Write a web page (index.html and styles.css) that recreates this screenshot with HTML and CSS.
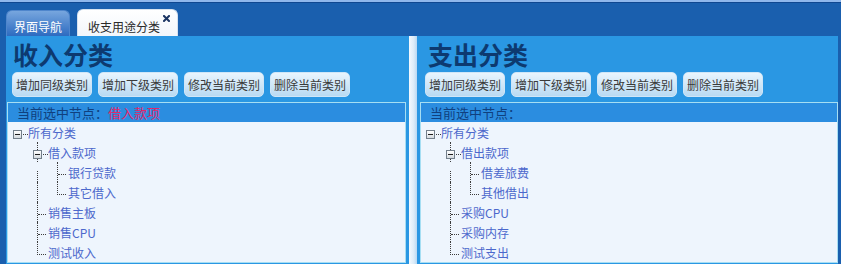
FILE: index.html
```html
<!DOCTYPE html>
<html lang="zh-CN">
  <head>
    <meta charset="UTF-8" />
    <meta name="viewport" content="width=device-width, initial-scale=1.0" />
    <title>收支用途分类</title>
    <link rel="stylesheet" href="styles.css">
  </head>
  <body>
    <div class="topbar">
      <div class="tab">界面导航</div>
      <div class="tab active">
        <span>收支用途分类</span>
        <svg class="close" width="7" height="7" viewBox="0 0 7 7"><path d="M1 1L6 6M6 1L1 6" stroke="#1b3563" stroke-width="2" stroke-linecap="square"/></svg>
      </div>
    </div>
    <div class="main">
      <section class="panel panel-left">
        <h1 class="title">收入分类</h1>
        <div class="toolbar">
          <button class="btn">增加同级类别</button>
          <button class="btn">增加下级类别</button>
          <button class="btn">修改当前类别</button>
          <button class="btn">删除当前类别</button>
        </div>
        <div class="box">
          <div class="current">当前选中节点：<span class="picked">借入款项</span></div>
          <div class="tree">
            <div class="row">
              <span class="cell"><span class="node top"><i class="tog"></i><i class="stub"></i></span></span>
              <span class="label">所有分类</span>
            </div>
            <div class="row">
              <span class="cell"></span>
              <span class="cell"><span class="node"><i class="up"></i><span class="knob"><i class="tog"></i><i class="stub"></i></span><i class="down"></i></span></span>
              <span class="label">借入款项</span>
            </div>
            <div class="row">
              <span class="cell"></span>
              <span class="cell"><i class="vline late"></i></span>
              <span class="cell"><i class="tee"><i></i></i></span>
              <span class="label">银行贷款</span>
            </div>
            <div class="row">
              <span class="cell"></span>
              <span class="cell"><i class="vline"></i></span>
              <span class="cell"><i class="corner"></i></span>
              <span class="label">其它借入</span>
            </div>
            <div class="row">
              <span class="cell"></span>
              <span class="cell"><i class="tee"><i></i></i></span>
              <span class="label">销售主板</span>
            </div>
            <div class="row">
              <span class="cell"></span>
              <span class="cell"><i class="tee"><i></i></i></span>
              <span class="label">销售CPU</span>
            </div>
            <div class="row">
              <span class="cell"></span>
              <span class="cell"><i class="corner"></i></span>
              <span class="label">测试收入</span>
            </div>
          </div>
        </div>
      </section>
      <div class="split"></div>
      <section class="panel panel-right">
        <h1 class="title">支出分类</h1>
        <div class="toolbar">
          <button class="btn">增加同级类别</button>
          <button class="btn">增加下级类别</button>
          <button class="btn">修改当前类别</button>
          <button class="btn">删除当前类别</button>
        </div>
        <div class="box">
          <div class="current">当前选中节点：<span class="picked"></span></div>
          <div class="tree">
            <div class="row">
              <span class="cell"><span class="node top"><i class="tog"></i><i class="stub"></i></span></span>
              <span class="label">所有分类</span>
            </div>
            <div class="row">
              <span class="cell"></span>
              <span class="cell"><span class="node"><i class="up"></i><span class="knob"><i class="tog"></i><i class="stub"></i></span><i class="down"></i></span></span>
              <span class="label">借出款项</span>
            </div>
            <div class="row">
              <span class="cell"></span>
              <span class="cell"><i class="vline late"></i></span>
              <span class="cell"><i class="tee"><i></i></i></span>
              <span class="label">借差旅费</span>
            </div>
            <div class="row">
              <span class="cell"></span>
              <span class="cell"><i class="vline"></i></span>
              <span class="cell"><i class="corner"></i></span>
              <span class="label">其他借出</span>
            </div>
            <div class="row">
              <span class="cell"></span>
              <span class="cell"><i class="tee"><i></i></i></span>
              <span class="label">采购CPU</span>
            </div>
            <div class="row">
              <span class="cell"></span>
              <span class="cell"><i class="tee"><i></i></i></span>
              <span class="label">采购内存</span>
            </div>
            <div class="row">
              <span class="cell"></span>
              <span class="cell"><i class="corner"></i></span>
              <span class="label">测试支出</span>
            </div>
          </div>
        </div>
      </section>
    </div>
  </body>
</html>
```

FILE: styles.css
```css
:root {
  --dark: #1a5fae;
  --panel: #2a97e3;
  --navy: #0d3a70;
  --tree-bg: #eef5fd;
  --tree-text: #4c68cc;
  --dots: #3c3c3c;
  --font: "Noto Sans CJK SC", "Noto Sans", sans-serif;
}
html, body {
  margin: 0;
  background: #fff;
  font-family: var(--font);
}
.topbar {
  height: 34px;
  border-top: 2px solid #8fb7ec;
  background: linear-gradient(#0f4791 0 1px, var(--dark) 1px);
  display: flex;
  align-items: flex-end;
  gap: 7px;
  padding-left: 6px;
}
.tab {
  box-sizing: border-box;
  height: 26px;
  width: 64px;
  border: 1px solid #4f86cc;
  border-bottom: 0;
  border-radius: 6px 6px 0 0;
  background: linear-gradient(#77a6de, #2d6bc0);
  color: #fff;
  font-size: 12px;
  line-height: 18px;
  padding-top: 7px;
  text-align: center;
}
.tab.active {
  height: 27px;
  width: 101px;
  border-color: #d6e2ef;
  background: linear-gradient(#ffffff, #f2f6fb);
  color: #2a2a2a;
  display: flex;
  align-items: flex-start;
  padding: 8px 0 0 10px;
  text-align: left;
}
.close { margin: -3px 0 0 3px; }
.main {
  height: 228px;
  display: flex;
  background: var(--dark);
  padding: 0 3px 0 6px;
}
.panel {
  display: flex;
  flex-direction: column;
  background: var(--panel);
  padding: 2px 0 1px;
}
.panel-left { width: 403px; box-sizing: border-box; padding-left: 1px; padding-right: 3px; }
.panel-right { flex: 1; padding-left: 3px; }
.panel-right .title { margin-left: 8px; }
.split {
  width: 8px;
  background: linear-gradient(90deg, #f4f9fe, #dcecf9 60%, #b9d8f2);
}
.title {
  margin: 0 0 2px 6px;
  font-size: 25px;
  line-height: 32px;
  font-weight: 700;
  color: var(--navy);
}
.toolbar { display: flex; gap: 6px; margin-left: 5px; }
.btn {
  height: 25px;
  padding: 0 3px;
  border: 1px solid #cfe6f8;
  border-radius: 5px;
  background: linear-gradient(#e9f5fe, #b9daf2);
  font-family: var(--font);
  font-size: 12px;
  line-height: 23px;
  color: #3a3a3a;
}
.box {
  flex: 1;
  margin-top: 5px;
  border: 1px solid #a6def3;
  display: flex;
  flex-direction: column;
}
.current {
  height: 19px;
  padding-left: 9px;
  font-size: 13px;
  line-height: 19px;
  color: #10407e;
  background: #2b8de0;
}
.picked { color: #e3266a; }
.tree {
  flex: 1;
  background: var(--tree-bg);
}
.row { display: flex; height: 20px; }
.cell { width: 20px; height: 20px; display: flex; flex-direction: column; }
.cell i { display: block; }
.label {
  font-size: 12px;
  line-height: 21px;
  color: var(--tree-text);
}
.node { display: flex; flex-direction: column; }
.node.top { flex-direction: row; align-items: center; margin: 8px 0 0 5px; }
.up { height: 8px; margin-left: 9px; border-left: 1px dotted var(--dots); }
.down { height: 3px; margin-left: 9px; border-left: 1px dotted var(--dots); }
.knob { display: flex; align-items: center; margin-left: 5px; }
.tog {
  box-sizing: border-box;
  width: 9px;
  height: 9px;
  border: 1px solid #737f8b;
  background:
    linear-gradient(#1e1e1e, #1e1e1e) center / 5px 1px no-repeat,
    linear-gradient(#ffffff, #d5dbe0);
}
.stub { width: 5px; border-top: 1px dotted var(--dots); margin-left: 1px; }
.vline { height: 20px; margin-left: 9px; border-left: 1px dotted var(--dots); }
.vline.late { height: 11px; margin-top: 9px; }
.tee { height: 20px; width: 8px; margin-left: 9px; border-left: 1px dotted var(--dots); }
.tee i { height: 12px; border-bottom: 1px dotted var(--dots); }
.corner {
  height: 12px;
  width: 8px;
  margin-left: 9px;
  border-left: 1px dotted var(--dots);
  border-bottom: 1px dotted var(--dots);
}
```
